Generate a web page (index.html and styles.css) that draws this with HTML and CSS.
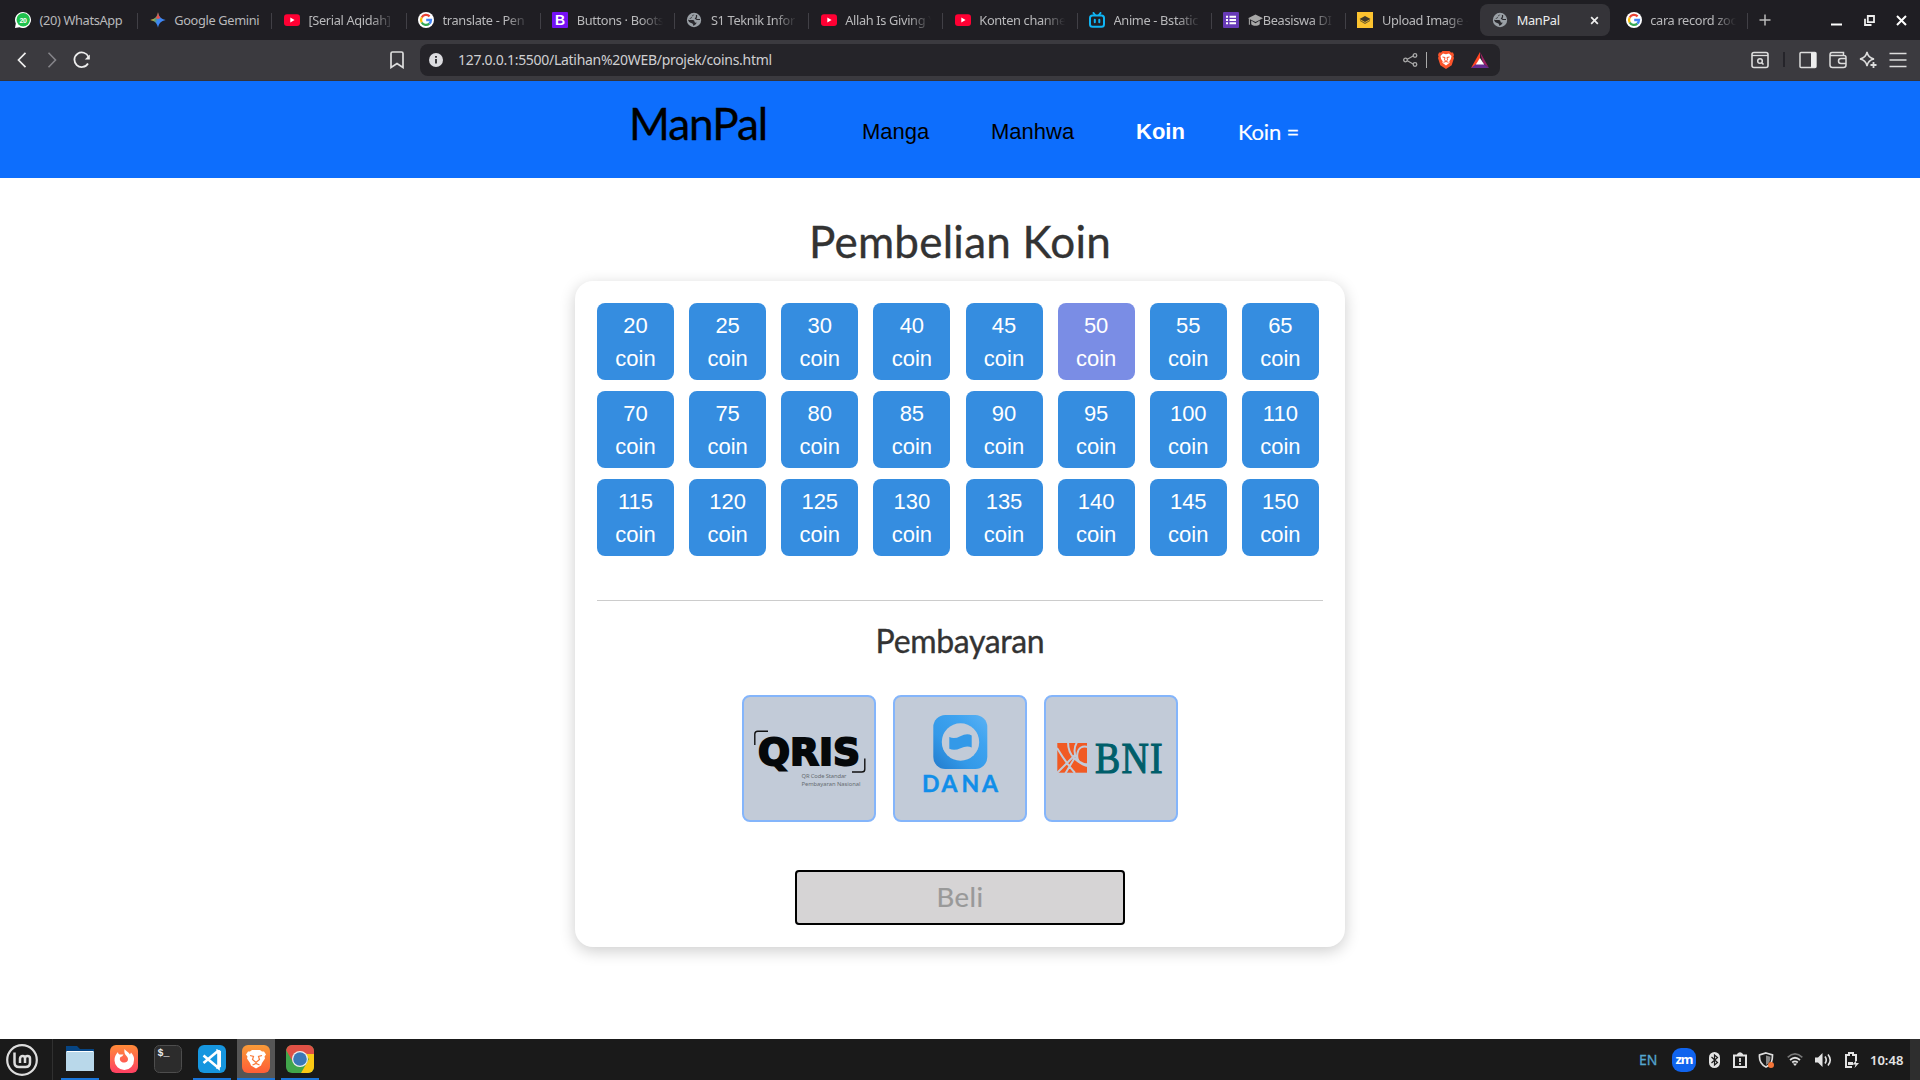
FILE: index.html
```html
<!DOCTYPE html>
<html lang="id">
<head>
<meta charset="utf-8">
<title>ManPal</title>
<link rel="stylesheet" href="styles.css">
</head>
<body>
<svg class="defs" width="0" height="0" aria-hidden="true">
  <symbol id="yt" viewBox="0 0 16 16"><rect y="2.3" width="16" height="11.7" rx="3" fill="#ff0033"/><path d="M6.3 5.6v5l4.3-2.5z" fill="#fff"/></symbol>
  <symbol id="globe" viewBox="0 0 16 16"><circle cx="8" cy="8" r="7.200" fill="#9aa0a6"/><path d="M8.500 2.500Q6 2.500 6 4.500T3 7l-.5 1H7q1.500 0 1.500 1.500t1.500 1-.5 2L7.500 14Q7 11 5 11T2 8z" fill="#2a292e"/><path d="M10.500 3v2l-1 1.500 1.500 1h3" stroke="#2a292e" stroke-width="1.200" fill="none"/></symbol>
  <symbol id="google" viewBox="0 0 16 16"><circle cx="8" cy="8" r="8" fill="#fff"/><g fill="none" stroke-width="2.300"><path d="M11.600 4.400A5 5 0 0 0 3.700 5.500" stroke="#ea4335"/><path d="M3.700 5.500a5 5 0 0 0 0 5" stroke="#fbbc05"/><path d="M3.700 10.500a5 5 0 0 0 7.600 1.200" stroke="#34a853"/><path d="M11.300 11.700A5 5 0 0 0 13 8H8.200" stroke="#4285f4"/></g></symbol>
  <symbol id="lion" viewBox="0 0 16 18"><path d="M4.500 0h7l1.500 1.500 2-.1 1 2.600-.6 1.500.6 1.500-2.300 7.200L8 18l-5.700-3.800L0 7l.6-1.500L0 4l1-2.600 2 .1z" fill="#fb542b"/><path d="M8 3.200l3-.6 2.500 2.500-.6 2.900-1.600 2.200.3 1.500L8 14.600l-3.600-2.900.3-1.500L3.100 8l-.6-2.900L5 2.600z" fill="#fff"/><path d="M4.500 6l2.500.5-.5 2.400L8 10.400l1.500-1.500L9 6.500l2.500-.5M5.500 11.300L8 10.500l2.500.8" fill="none" stroke="#fb542b" stroke-width="1"/></symbol>
</svg>

<div class="tabs">
  <div class="tab"><svg viewBox="0 0 16 16"><path d="M8 0a8 8 0 1 1-3.500 15.200L0 16l.8-4.500A8 8 0 0 1 8 0z" fill="#fff"/><circle cx="8.200" cy="7.800" r="6.700" fill="#1fc24d"/><text x="8" y="10.500" text-anchor="middle" class="wa">20</text></svg><span>(20) WhatsApp</span></div>
  <div class="tab"><svg viewBox="0 0 16 16"><defs><linearGradient id="gem" x1="0" y1=".3" x2="1" y2=".7"><stop offset=".1" stop-color="#fbbc30"/><stop offset=".35" stop-color="#5e9c74"/><stop offset=".5" stop-color="#3b86f2"/><stop offset="1" stop-color="#4285f4"/></linearGradient></defs><path d="M8 .3C9 5 11 7 15.700 8 11 9 9 11 8 15.700 7 11 5 9 .3 8 5 7 7 5 8 .3z" fill="url(#gem)"/><path d="M8 .3C8.500 3.500 9.500 5 10.500 6L8 7 5.700 6C7 5 7.500 3.500 8 .3z" fill="#e7524d"/></svg><span>Google Gemini</span></div>
  <div class="tab fade"><svg><use href="#yt"/></svg><span>[Serial Aqidah]</span></div>
  <div class="tab fade"><svg><use href="#google"/></svg><span>translate - Pen</span></div>
  <div class="tab fade"><svg viewBox="0 0 16 16"><rect width="16" height="16" rx="1" fill="#7411f5"/><text x="8" y="13" text-anchor="middle" class="bs">B</text></svg><span>Buttons · Boots</span></div>
  <div class="tab fade"><svg><use href="#globe"/></svg><span>S1 Teknik Infor</span></div>
  <div class="tab fade"><svg><use href="#yt"/></svg><span>Allah Is Giving Y</span></div>
  <div class="tab fade"><svg><use href="#yt"/></svg><span>Konten channe</span></div>
  <div class="tab fade"><svg viewBox="0 0 16 16"><g fill="none" stroke="#10b5f4" stroke-width="2" stroke-linecap="round"><rect x="1" y="3.500" width="14" height="11.300" rx="2.500"/><path d="M4.500 1l1.500 2M11.500 1L10 3M5.800 7.800v2.500M10.300 7.800v2.500"/></g></svg><span>Anime - Bstatic</span></div>
  <div class="tab fade"><svg viewBox="0 0 16 16"><rect width="16" height="16" rx="1" fill="#673ab7"/><path d="M3 4.800h2M6.500 4.800H13M3 8h2M6.500 8H13M3 11.200h2M6.500 11.200H13" stroke="#fff" stroke-width="1.900"/></svg><span><svg class="cap" viewBox="0 0 14 12"><path d="M0 4l7-3.500L14 4 7 7.500zM3 6v3.500c2 2 6 2 8 0V6L7 8.500z" fill="#a7a7a7"/><path d="M1.300 4.500V10" stroke="#a7a7a7"/></svg>Beasiswa DI</span></div>
  <div class="tab fade"><svg viewBox="0 0 16 16"><rect width="16" height="16" fill="#fcc32f"/><path d="M8 4l5.500 3L8 10 2.500 7z" fill="#403a2a"/><path d="M3 8l5 2.700L13 8v1L8 12 3 9z" fill="#75602a"/></svg><span>Upload Image -</span></div>
  <div class="tab active"><svg><use href="#globe"/></svg><span>ManPal</span><svg class="x" viewBox="0 0 10 10"><path d="M1.300 1.300l7.400 7.400M8.700 1.300L1.300 8.700" stroke="#eee" stroke-width="1.900"/></svg></div>
  <div class="tab fade"><svg><use href="#google"/></svg><span>cara record zoo</span></div>
  <svg class="plus" viewBox="0 0 12 12"><path d="M6 .5v11M.5 6h11" stroke="#bbb" stroke-width="1.500"/></svg>
  <div class="window">
    <svg viewBox="0 0 11 11"><path d="M0 9.500h11" stroke="#fff" stroke-width="2"/></svg>
    <svg viewBox="0 0 11 11"><path d="M3.800 1h6.200v6.200H3.800zM1 3.800v6.200h6.500" fill="none" stroke="#eee" stroke-width="1.800"/></svg>
    <svg viewBox="0 0 11 11"><path d="M1 1l9 9M10 1l-9 9" stroke="#fff" stroke-width="2"/></svg>
  </div>
</div>

<div class="toolbar">
  <svg class="back" viewBox="0 0 10 16"><path d="M8.500.8L1.500 8l7 7.200" fill="none" stroke="#eee" stroke-width="1.700"/></svg>
  <svg class="fwd" viewBox="0 0 10 16"><path d="M1.500.8L8.500 8l-7 7.200" fill="none" stroke="#858489" stroke-width="1.600"/></svg>
  <svg class="reload" viewBox="0 0 18 18"><path d="M15 12.500A7.300 7.300 0 1 1 15.500 6" fill="none" stroke="#eee" stroke-width="1.800"/><path d="M16.800 3.500v5h-5z" fill="#eee"/></svg>
  <svg class="mark" viewBox="0 0 14 18"><path d="M1 2.500Q1 1 2.500 1h9Q13 1 13 2.500V16.500L7 12.500 1 16.500z" fill="none" stroke="#ddd" stroke-width="1.700"/></svg>
  <div class="address">
    <svg class="info" viewBox="0 0 14 14"><circle cx="7" cy="7" r="7" fill="#dcdce0"/><path d="M7 6v4.500M7 3v1.800" stroke="#29282d" stroke-width="1.800"/></svg>
    <span class="url">127.0.0.1:5500/Latihan%20WEB/projek/coins.html</span>
    <svg class="share" viewBox="0 0 15 14"><path d="M11 2.500L3 7l8 4.500" fill="none" stroke="#aaa" stroke-width="1.200"/><g fill="#252429" stroke="#aaa" stroke-width="1.300"><circle cx="12" cy="2.500" r="1.800"/><circle cx="2.500" cy="7" r="1.800"/><circle cx="12" cy="11.500" r="1.800"/></g></svg>
    <i></i>
    <svg class="shield" viewBox="0 0 16 18"><use href="#lion" width="16" height="18"/></svg>
    <svg class="bat" viewBox="0 0 18 16"><path d="M9 0L0 16l9-5z" fill="#ff4724"/><path d="M9 0l9 16-6-5z" fill="#9e1f63"/><path d="M0 16h18l-5-4H5z" fill="#662d91"/><path d="M9 6l4.200 6.500H4.800z" fill="#fff"/></svg>
  </div>
  <div class="actions">
    <svg viewBox="0 0 18 18"><rect x="1" y="1.500" width="16" height="15" rx="2" fill="none" stroke="#ddd" stroke-width="1.600"/><path d="M1 4.500h16" stroke="#ddd" stroke-width="1.300"/><circle cx="9" cy="10" r="2.300" fill="none" stroke="#ddd" stroke-width="1.500"/><path d="M10.500 11.500l2 2" stroke="#ddd" stroke-width="1.600"/></svg>
    <i></i>
    <svg viewBox="0 0 18 18"><rect x="1" y="1.500" width="16" height="15" rx="1" fill="none" stroke="#ddd" stroke-width="1.500"/><path d="M12 1.500h5v15h-5z" fill="#eee"/></svg>
    <svg viewBox="0 0 18 18"><path d="M14.500 4V1.500H3Q1 1.500 1 4v10q0 2.500 2.500 2.500h11Q17 16.500 17 14V6.500Q17 4.500 15 4.500H1M17 7.500h-5Q9.500 7.500 9.500 10t2.500 2.500h5" fill="none" stroke="#ddd" stroke-width="1.500"/></svg>
    <svg viewBox="0 0 18 18"><path d="M8 1c.7 4 2.500 6 7 7-4.500 1-6.300 3-7 7-.7-4-2.500-6-7-7 4.500-1 6.300-3 7-7z" fill="none" stroke="#ddd" stroke-width="1.500"/><path d="M14.500 11v6M11.500 14h6" stroke="#ddd" stroke-width="1.800"/></svg>
    <svg viewBox="0 0 18 18"><path d="M.5 2.500h17M.5 9h17M.5 15.500h17" stroke="#ddd" stroke-width="1.700"/></svg>
  </div>
</div>

<header class="navbar">
  <a class="brand">ManPal</a>
  <a class="link manga">Manga</a>
  <a class="link manhwa">Manhwa</a>
  <a class="link current">Koin</a>
  <span class="balance">Koin =</span>
</header>

<main class="page">
  <h1>Pembelian Koin</h1>
  <section class="card">
    <div class="coins">
      <button>20 coin</button><button>25 coin</button><button>30 coin</button><button>40 coin</button><button>45 coin</button><button class="selected">50 coin</button><button>55 coin</button><button>65 coin</button>
      <button>70 coin</button><button>75 coin</button><button>80 coin</button><button>85 coin</button><button>90 coin</button><button>95 coin</button><button>100 coin</button><button>110 coin</button>
      <button>115 coin</button><button>120 coin</button><button>125 coin</button><button>130 coin</button><button>135 coin</button><button>140 coin</button><button>145 coin</button><button>150 coin</button>
    </div>
    <hr>
    <h2>Pembayaran</h2>
    <div class="methods">
      <div class="method"><svg viewBox="0 0 130 123">
        <path d="M10.800 48V37q0-2.800 3-2.800H24M120.800 61.500v10.700q0 2.800-3 2.800H108" fill="none" stroke="#111" stroke-width="1.400"/>
        <text class="qris" y="68" x="14" textLength="102" lengthAdjust="spacingAndGlyphs">QRIS</text>
        <text class="fine" x="57.500" y="81.300" textLength="45">QR Code Standar</text>
        <text class="fine" x="57.500" y="88.700" textLength="59">Pembayaran Nasional</text>
      </svg></div>
      <div class="method"><svg viewBox="0 0 130 123">
        <defs><linearGradient id="dana" x1="0" y1="1" x2="1" y2="0"><stop offset="0" stop-color="#237bcc"/><stop offset=".35" stop-color="#3399e8"/><stop offset=".7" stop-color="#3ea3f0"/><stop offset="1" stop-color="#5cb2f3"/></linearGradient></defs>
        <rect x="38.300" y="18" width="54" height="54" rx="12" fill="url(#dana)"/><circle cx="65.500" cy="45" r="18.700" fill="#c2cbd8"/>
        <path d="M54.300 40q5 2.500 11-.8 6.500-3.200 11.400-.8v12q-5-2-11.200.8-6.200 3-11.200.5z" fill="#3399e8"/>
        <text class="dana" x="27 46.500 66.500 87" y="94.500">DANA</text>
      </svg></div>
      <div class="method"><svg viewBox="0 0 130 123">
        <path d="M11.300 46H41v29.700H11.300z" fill="#f15a23"/>
        <g fill="none" stroke="#c2cbd8" stroke-width="2"><path d="M11 51q9 15 18 25M22 45q0 11 7 17t12 7M31 45q-5 9 0 17M42 50q-9-2-10.500 6T36 66q3 2 6 1M11 76L29 58M28 62l-9 15"/></g>
        <g transform="translate(49 75.500) scale(.84 1)"><text class="bni" x="0 31.500 65.500">BNI</text></g>
      </svg></div>
    </div>
    <button class="buy" disabled>Beli</button>
  </section>
</main>

<footer class="taskbar">
  <svg class="mint" viewBox="0 0 32 32"><circle cx="16" cy="16" r="14.800" fill="none" stroke="#ddd" stroke-width="2.200"/><path d="M8.500 8.500v10q0 4.500 4.500 4.500h6.500q4.500 0 4.500-4.500v-4q0-2.500-2.500-2.500T19 14.500V19M19 14.500q0-2.500-2.300-2.500T14 14.500V19" fill="none" stroke="#ddd" stroke-width="2.500"/></svg>
  <div class="apps">
    <div class="app open"><svg viewBox="0 0 28 28"><path d="M0 1h11l3 3h14v10H0z" fill="#064584"/><path d="M0 7q0-1 1-1h26q1 0 1 1v19H0z" fill="#b9d8ea"/><path d="M1 6.500h26" stroke="#fff"/></svg></div>
    <div class="app"><svg viewBox="0 0 28 28"><defs><linearGradient id="fire" x2="0" y2="1"><stop stop-color="#ff8b38"/><stop offset="1" stop-color="#ff3f62"/></linearGradient></defs><rect width="28" height="28" rx="6" fill="url(#fire)"/><path d="M14.500 4c1 2 4 3 5.500 5.500l1-2C23 10 24.500 12 24 15a9.600 9.600 0 0 1-19.500.5C4.300 12 6 9 8 7c0 2 1 2.500 3 2.500h2.500q-1 2-3 2.500c-2 3 1 6 4 5.500 4-.5 4.500-4 2-6.500-2-2-2.500-4-2-7z" fill="#fff"/></svg></div>
    <div class="app"><svg viewBox="0 0 28 28"><rect x=".5" y=".5" width="27" height="27" rx="5" fill="#2c2c2c" stroke="#4d4d4d"/><text x="3.500" y="11" class="prompt">$_</text></svg></div>
    <div class="app open"><svg viewBox="0 0 28 28"><rect width="28" height="28" rx="6" fill="#1696df"/><path d="M20.500 5v18L5.500 10.500M20.500 5.500L5.500 18" fill="none" stroke="#fff" stroke-width="2.600"/><path d="M18 4l5 2v16l-5 2 2-5V9z" fill="#fff"/></svg></div>
    <div class="app open focus"><svg viewBox="0 0 28 28"><defs><linearGradient id="brave" x2="0" y2="1"><stop stop-color="#f89b38"/><stop offset="1" stop-color="#ff5d36"/></linearGradient></defs><rect width="28" height="28" rx="6" fill="url(#brave)"/><path d="M10 5h8l2 1.500h2l2 3-1.500 2 .5 2-3 4.500-1 2.500-5 3-5-3L8 18l-3-4.500.5-2-1.500-2 2-3h2z" fill="#fff"/><path d="M8 10.500l3.500 1-1 3 3.500 3 3.500-3-1-3 3.500-1M10.500 20l3.500-1.500 3.500 1.500" fill="none" stroke="#f97a38" stroke-width="1.200"/></svg></div>
    <div class="app open"><svg viewBox="0 0 28 28"><clipPath id="sq"><rect width="28" height="28" rx="6"/></clipPath><g clip-path="url(#sq)"><path d="M0 0h28v28H0z" fill="#41a64b"/><path d="M14 6h14v22H15l8-14z" fill="#fbc914"/><path d="M2 0h26v9H14L7 17 0 5z" fill="#df5045"/></g><circle cx="14" cy="14" r="8" fill="#eee"/><circle cx="14" cy="14" r="6.800" fill="#3a78b7"/></svg></div>
  </div>
  <div class="tray">
    <span class="lang">EN</span>
    <span class="zoom">zm</span>
    <svg class="bt" viewBox="0 0 11 16"><rect width="11" height="16" rx="5.500" fill="#e3e3e3"/><path d="M2.500 5l6 5.500L5.500 13V3l3 2.500-6 5.500" fill="none" stroke="#1a1a1a" stroke-width="1.200"/></svg>
    <svg class="clip" viewBox="0 0 14 16"><path d="M1 3.500h12V15H1z" fill="none" stroke="#e3e3e3" stroke-width="2"/><path d="M4 4V2q3-3.500 6 0v2z" fill="#e3e3e3"/><path d="M7 6v4M7 11v2" stroke="#e3e3e3" stroke-width="1.800"/></svg>
    <svg class="guard" viewBox="0 0 16 16"><path d="M8 1l6.500 2c0 6-1 9.500-6.500 12C2.500 12.500 1 9 1.500 3z" fill="none" stroke="#ddd" stroke-width="1.700"/><path d="M8 3.500l4.500 1.300Q12.500 11 8 13z" fill="#888"/><circle cx="13" cy="13" r="3" fill="#f47437"/></svg>
    <svg class="wifi" viewBox="0 0 16 13"><g fill="none" stroke-width="1.700"><path d="M.7 4.300Q8-2.500 15.300 4.300" stroke="#777"/><path d="M3 7q5-4.500 10 0M5.200 9.500q2.800-2.400 5.600 0" stroke="#e3e3e3"/></g><path d="M5.800 10.500h4.400L8 13z" fill="#e3e3e3"/></svg>
    <svg class="vol" viewBox="0 0 17 14"><path d="M0 4.500h3L7.500 0v14L3 9.500H0z" fill="#e3e3e3"/><path d="M10 3.500q2.500 3.500 0 7M13 1.500q4.500 5.500 0 11" fill="none" stroke="#e3e3e3" stroke-width="1.600"/></svg>
    <svg class="power" viewBox="0 0 14 16"><path d="M7 15H1V3h3V1h4v2h3v6" fill="none" stroke="#e3e3e3" stroke-width="2"/><path d="M3 10h5v3H3z" fill="#e3e3e3"/><path d="M11.500 8L7.500 12.500h3L9.500 16l4.500-5h-3z" fill="#e3e3e3"/></svg>
    <time>10:48</time>
    <i class="corner"></i>
  </div>
</footer>
</body>
</html>
```
FILE: styles.css
```css
* { box-sizing: border-box; }
body {
  margin: 0;
  height: 1080px;
  overflow: hidden;
  display: flex;
  flex-direction: column;
  background: #fff;
  font-family: "Noto Sans", sans-serif;
}
svg { display: block; flex: none; }
.defs { position: absolute; }

/* browser tabs */
.tabs {
  height: 40px;
  flex: none;
  display: flex;
  align-items: center;
  padding-left: 3px;
  background: #1f1e23;
}
.tab {
  width: 134.2px;
  height: 32px;
  flex: none;
  display: flex;
  align-items: center;
  gap: 8.5px;
  padding-left: 12.500px;
  position: relative;
  color: #b9b9bb;
  font-size: 12.8px;
  letter-spacing: -0.34px;
}
.tab:first-child { padding-left: 12px; }
.tab::after {
  content: "";
  position: absolute;
  right: -1px;
  top: 9px;
  width: 1px;
  height: 16px;
  background: #414046;
}
.tab > svg { width: 16px; height: 16px; }
.tab span {
  white-space: nowrap;
  display: flex;
  align-items: center;
}
.tab.fade span {
  width: 88px;
  mask-image: linear-gradient(to right, #000 72%, transparent 98%);
}
.tab .cap { width: 15px; height: 13px; }
.tab.active {
  width: 130px;
  margin: 0 3px 0 1.200px;
  border-radius: 8px;
  background: #353439;
  color: #eee;
  padding-left: 12px;
}
.tab.active::after, .tab:nth-child(11)::after { display: none; }
.tab.active .x { width: 9px; height: 9px; margin: 0 11px 0 auto; }
.plus { width: 12px; height: 12px; margin-left: 11.500px; }
.window { display: flex; gap: 21.500px; margin: 0 13px 0 auto; }
.window svg { width: 11px; height: 11px; }

/* toolbar */
.toolbar {
  height: 41px;
  flex: none;
  display: flex;
  align-items: center;
  padding: 0 13px 1px 17px;
  background: #3b3a3f;
  border-bottom: 1px solid #343339;
}
.back, .fwd { width: 10px; height: 16px; }
.fwd { margin-left: 20px; }
.reload { width: 18px; height: 18px; margin-left: 16px; }
.mark { width: 14px; height: 18px; margin-left: 299px; }
.address {
  width: 1080px;
  height: 32px;
  margin-left: 16px;
  display: flex;
  align-items: center;
  padding: 0 11px 0 9px;
  border-radius: 8px;
  background: #252429;
}
.info { width: 14px; height: 14px; }
.url { margin-left: 15px; font-size: 14px; letter-spacing: -0.290px; color: #cfcfd2; white-space: nowrap; }
.share { width: 15px; height: 14px; margin-left: auto; }
.address i { width: 1px; height: 16px; margin: 0 11px 0 8px; background: #aaa; }
.shield { width: 16px; height: 18px; }
.bat { width: 18px; height: 16px; margin-left: 17px; }
.actions { margin-left: auto; display: flex; align-items: center; gap: 12px; }
.actions svg { width: 18px; height: 18px; }
.actions i { width: 2px; height: 15px; margin: 0 2px; background: #25242a; }

/* site navigation */
.navbar {
  height: 97px;
  flex: none;
  display: flex;
  align-items: flex-start;
  padding: 15px 0 0 629px;
  background: #0d6efd;
  font-size: 22px;
  line-height: 26px;
  white-space: nowrap;
}
.brand {
  width: 233px;
  font: 44px/54px Lato, sans-serif;
  letter-spacing: -1px;
  -webkit-text-stroke: 0.350px;
}
.link { margin-top: 23px; font-family: "Liberation Sans", sans-serif; }
.manga { width: 129px; }
.manhwa { width: 145px; }
.current { width: 102px; font-weight: 700; color: #fff; }
.balance { margin-top: 23px; font-family: Lato, sans-serif; letter-spacing: -0.200px; color: #fff; -webkit-text-stroke: 0.150px; }

/* purchase panel */
.page {
  flex: 1;
  display: flex;
  flex-direction: column;
  align-items: center;
  color: #333;
}
h1, h2 {
  font-family: Lato, sans-serif;
  font-weight: 400;
  text-align: center;
  -webkit-text-stroke: 0.350px;
}
h1 { margin: 37px 0 13px; font-size: 44px; line-height: 53px; letter-spacing: 0.250px; white-space: nowrap; }
.card {
  width: 770px;
  height: 666px;
  padding: 22px;
  display: flex;
  flex-direction: column;
  align-items: center;
  border-radius: 18px;
  background: #fff;
  box-shadow: 0 4px 16px rgba(0, 0, 0, 0.2);
}
.coins {
  align-self: flex-start;
  display: grid;
  grid-template-columns: repeat(8, 77px);
  gap: 11px 15.140px;
}
.coins button {
  width: 77px;
  height: 77px;
  padding: 0 16px;
  border: 0;
  border-radius: 8px;
  background: #358de0;
  color: #fff;
  font: 22px/33px "Liberation Sans", sans-serif;
}
.coins .selected { background: #7a8de5; }
hr { width: 726px; margin: 44px 0 0; border: 0; border-top: 1px solid #ccc; }
h2 { margin: 20px 0 0; font-size: 32px; line-height: 40px; letter-spacing: -0.350px; }
.methods { display: flex; gap: 17px; margin-top: 34px; }
.method {
  width: 134px;
  height: 127px;
  border: 2px solid #84b5fb;
  border-radius: 8px;
  background: #c2cbd8;
}
.method svg { width: 130px; height: 123px; }
.qris { font: 700 37px "DejaVu Sans", sans-serif; fill: #05080a; stroke: #05080a; stroke-width: 2px; }
.fine { font: 5.800px "Noto Sans", sans-serif; fill: #666b71; }
.dana { font: 700 23px Lato, sans-serif; fill: #118ee9; stroke: #118ee9; stroke-width: 0.400px; }
.bni { font: 45px "Liberation Serif", serif; fill: #005e6a; stroke: #005e6a; stroke-width: 1.200px; }
.buy {
  width: 330px;
  height: 55px;
  margin-top: 48px;
  padding: 0 0 1px;
  border: 2px solid #000;
  border-radius: 4px;
  background: #d6d4d5;
  color: #999;
  font: 27.500px/50px Lato, sans-serif;
  letter-spacing: 0.400px;
  -webkit-text-stroke: 0.200px;
}

/* desktop panel */
.taskbar {
  height: 41px;
  flex: none;
  display: flex;
  align-items: center;
  padding-left: 6px;
  background: #1a1a1a;
  color: #e3e3e3;
}
.mint { width: 32px; height: 32px; }
.apps { height: 41px; display: flex; gap: 6px; margin-left: 14px; padding-left: 8px; border-left: 1px solid #303030; }
.app { width: 38px; height: 41px; padding: 6px 5px 0; border-bottom: 2px solid transparent; }
.app svg { width: 28px; height: 28px; }
.app.focus { background: #555; }
.app.open { border-color: #1a75d9; }
.tray { height: 41px; margin-left: auto; display: flex; align-items: center; }
.lang { width: 33px; font-size: 14px; color: #55a6cf; -webkit-text-stroke: 0.300px; }
.zoom {
  width: 24px;
  height: 24px;
  border-radius: 9px;
  background: #1064ee;
  color: #fff;
  font: 700 13px/22px "Noto Sans", sans-serif;
  letter-spacing: -1px;
  text-align: center;
}
.bt { width: 11px; height: 16px; margin-left: 13px; }
.clip { width: 14px; height: 16px; margin-left: 13px; }
.guard { width: 16px; height: 16px; margin-left: 11px; }
.wifi { width: 16px; height: 13px; margin-left: 13px; }
.vol { width: 17px; height: 14px; margin-left: 12px; }
.power { width: 14px; height: 16px; margin-left: 13px; }
time { width: 40px; margin-left: 11px; font: 600 13px "Noto Sans", sans-serif; }
.corner { width: 10px; height: 41px; background: #2e2e2e; }
.wa { font: 700 7px "Liberation Sans", sans-serif; fill: #fff; }
.bs { font: 700 14px "Liberation Sans", sans-serif; fill: #fff; }
.prompt { font: 700 10px "Liberation Mono", monospace; fill: #eee; }
```
